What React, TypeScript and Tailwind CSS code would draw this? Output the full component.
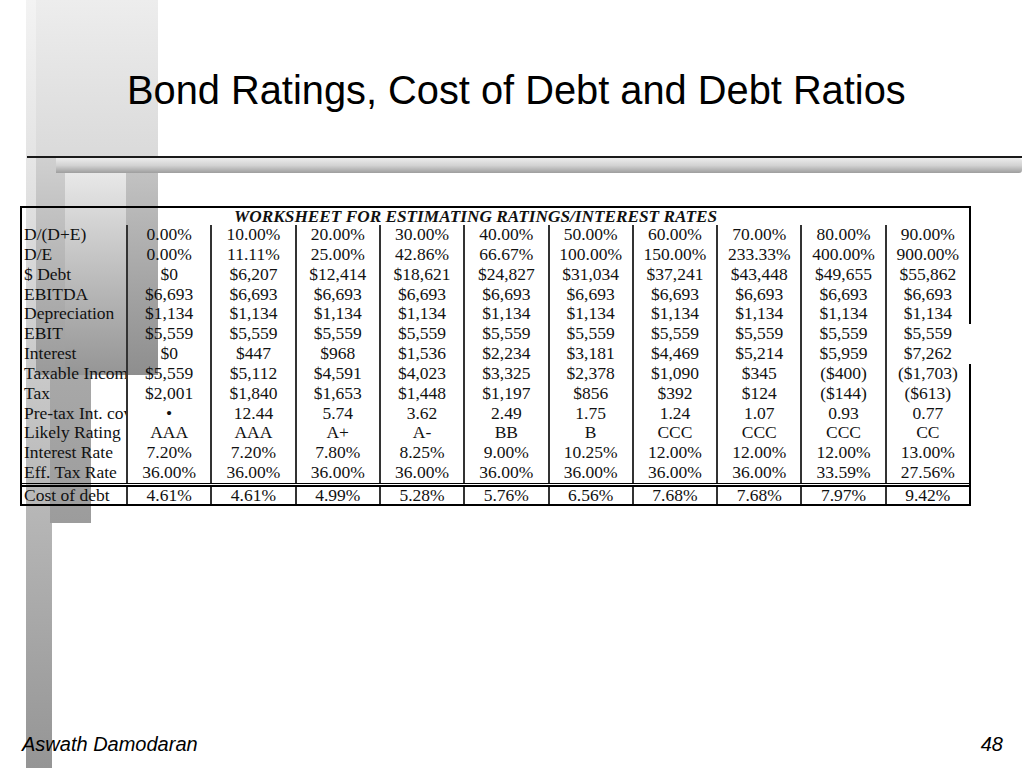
import React from "react";

type Row = [string, string[]];

const rows: Row[] = [
  ["D/(D+E)", ["0.00%", "10.00%", "20.00%", "30.00%", "40.00%", "50.00%", "60.00%", "70.00%", "80.00%", "90.00%"]],
  ["D/E", ["0.00%", "11.11%", "25.00%", "42.86%", "66.67%", "100.00%", "150.00%", "233.33%", "400.00%", "900.00%"]],
  ["$ Debt", ["$0", "$6,207", "$12,414", "$18,621", "$24,827", "$31,034", "$37,241", "$43,448", "$49,655", "$55,862"]],
  ["EBITDA", Array(10).fill("$6,693")],
  ["Depreciation", Array(10).fill("$1,134")],
  ["EBIT", Array(10).fill("$5,559")],
  ["Interest", ["$0", "$447", "$968", "$1,536", "$2,234", "$3,181", "$4,469", "$5,214", "$5,959", "$7,262"]],
  ["Taxable Income", ["$5,559", "$5,112", "$4,591", "$4,023", "$3,325", "$2,378", "$1,090", "$345", "($400)", "($1,703)"]],
  ["Tax", ["$2,001", "$1,840", "$1,653", "$1,448", "$1,197", "$856", "$392", "$124", "($144)", "($613)"]],
  ["Pre-tax Int. coverage", ["•", "12.44", "5.74", "3.62", "2.49", "1.75", "1.24", "1.07", "0.93", "0.77"]],
  ["Likely Rating", ["AAA", "AAA", "A+", "A-", "BB", "B", "CCC", "CCC", "CCC", "CC"]],
  ["Interest Rate", ["7.20%", "7.20%", "7.80%", "8.25%", "9.00%", "10.25%", "12.00%", "12.00%", "12.00%", "13.00%"]],
  ["Eff. Tax Rate", ["36.00%", "36.00%", "36.00%", "36.00%", "36.00%", "36.00%", "36.00%", "36.00%", "33.59%", "27.56%"]],
];

const cost = ["4.61%", "4.61%", "4.99%", "5.28%", "5.76%", "6.56%", "7.68%", "7.68%", "7.97%", "9.42%"];

function Background() {
  return (
    <div className="absolute inset-0">
      {/* top block */}
      <div className="absolute left-[26px] top-0 h-[157px] w-[132px] bg-gradient-to-b from-[#ededed] to-[#dadada]" />
      <div className="absolute left-[26px] top-0 h-[157px] w-[10px] bg-gradient-to-b from-[#f3f3f3] to-[#e4e4e4]" />
      {/* left strip */}
      <div className="absolute left-[26px] top-[157px] h-[611px] w-[26px] bg-gradient-to-b from-[#e6e6e6] via-[#bdbdbd] to-[#959595]" />
      {/* middle block */}
      <div className="absolute left-[36px] top-[157px] h-[218px] w-[122px] bg-gradient-to-b from-[#d0d0d0] to-[#9a9a9a]" />
      <div className="absolute left-[65px] top-[173px] h-[202px] w-[61px] bg-gradient-to-b from-[#e8e8e8] to-[#959595]" />
      <div className="absolute left-[126px] top-[157px] h-[218px] w-[32px] bg-gradient-to-b from-[#c6c6c6] to-[#8e8e8e]" />
      {/* lower box */}
      <div className="absolute left-[50px] top-[375px] h-[148px] w-[41px] bg-gradient-to-b from-[#a8a8a8] to-[#9c9c9c]" />
      {/* horizontal line & bar */}
      <div className="absolute left-[27px] top-[156px] h-[2px] w-[995px] bg-[#1a1a1a]" />
      <div className="absolute left-[56px] top-[158px] h-[15px] w-[966px] rounded-r-[3px] bg-gradient-to-b from-[#ececec] via-[#d2d2d2] to-[#9e9e9e]" />
    </div>
  );
}

export default function App() {
  return (
    <div className="relative h-[768px] w-[1024px] overflow-hidden bg-white text-black">
      <Background />
      <div className="relative flex h-full flex-col">
        <h1 className="mt-[70px] whitespace-nowrap pl-[127px] font-['Liberation_Sans',Arial,sans-serif] text-[39.8px] font-normal leading-[40px] text-black">
          Bond Ratings, Cost of Debt and Debt Ratios
        </h1>

        <div className="relative ml-[20px] mt-[96px] w-[951px] border-2 border-black font-['Liberation_Serif','Times_New_Roman',serif] text-[17.5px] text-[#111]">
          <div className="absolute right-[-2px] top-[116px] h-[40px] w-[2px] bg-white" />
          <div className="h-[17px] whitespace-nowrap pl-[212px] text-[17.25px] font-bold italic leading-[17px]">
            WORKSHEET FOR ESTIMATING RATINGS/INTEREST RATES
          </div>
          {rows.map(([label, vals]) => (
            <div key={label} className="grid h-[19.85px] grid-cols-[104px_repeat(10,minmax(0,1fr))] leading-[19.85px]">
              <div className="overflow-x-clip whitespace-nowrap pl-[2px]">{label}</div>
              {vals.map((v, i) => (
                <div key={i} className="whitespace-nowrap border-l-2 border-[#333] text-center">
                  {v}
                </div>
              ))}
            </div>
          ))}
          <div className="h-px bg-black" />
          <div className="h-px" />
          <div className="h-[2px] bg-black" />
          <div className="grid h-[17px] grid-cols-[104px_repeat(10,minmax(0,1fr))] leading-[17px]">
            <div className="overflow-x-clip whitespace-nowrap pl-[2px]">Cost of debt</div>
            {cost.map((v, i) => (
              <div key={i} className="whitespace-nowrap border-l-2 border-[#333] text-center">
                {v}
              </div>
            ))}
          </div>
        </div>

        <div className="mt-auto flex justify-between pb-[13px] pl-[22px] pr-[21px] font-['Liberation_Sans',Arial,sans-serif] text-[20px] italic leading-[22px]">
          <span>Aswath Damodaran</span>
          <span>48</span>
        </div>
      </div>
    </div>
  );
}
